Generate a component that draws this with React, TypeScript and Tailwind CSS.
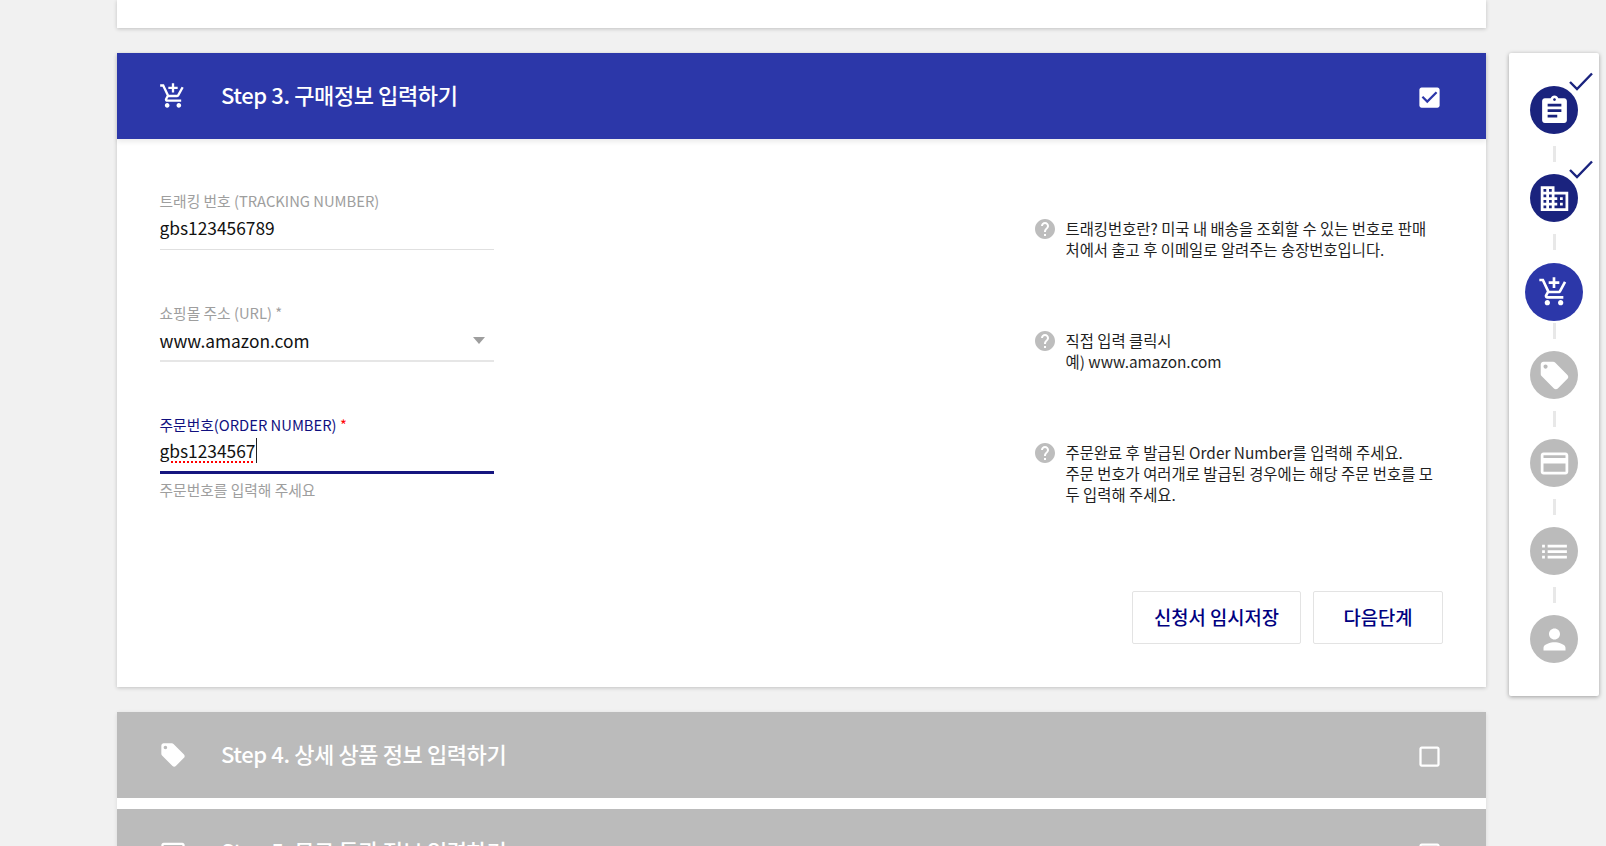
const P = {
  assignment: "M19 3h-4.18C14.4 1.84 13.3 1 12 1c-1.3 0-2.4.84-2.82 2H5c-1.1 0-2 .9-2 2v14c0 1.1.9 2 2 2h14c1.1 0 2-.9 2-2V5c0-1.1-.9-2-2-2zm-7 0c.55 0 1 .45 1 1s-.45 1-1 1-1-.45-1-1 .45-1 1-1zm2 14H7v-2h7v2zm3-4H7v-2h10v2zm0-4H7V7h10v2z",
  domain: "M12 7V3H2v18h20V7H12zM6 19H4v-2h2v2zm0-4H4v-2h2v2zm0-4H4V9h2v2zm0-4H4V5h2v2zm4 12H8v-2h2v2zm0-4H8v-2h2v2zm0-4H8V9h2v2zm0-4H8V5h2v2zm10 12h-8v-2h2v-2h-2v-2h2v-2h-2V9h8v10zm-2-8h-2v2h2v-2zm0 4h-2v2h2v-2z",
  cart: "M11 9h2V6h3V4h-3V1h-2v3H8v2h3v3zm-4 9c-1.1 0-1.99.9-1.99 2S5.9 22 7 22s2-.9 2-2-.9-2-2-2zm10 0c-1.1 0-1.99.9-1.99 2s.89 2 1.99 2 2-.9 2-2-.9-2-2-2zm-9.83-3.25l.03-.12.9-1.63h7.45c.75 0 1.41-.41 1.75-1.03l3.86-7.01L19.42 4h-.01l-1.1 2-2.76 5H8.53l-.13-.27L6.16 6l-.95-2-.94-2H1v2h2l3.6 7.59-1.35 2.45c-.16.28-.25.61-.25.96 0 1.1.9 2 2 2h12v-2H7.42c-.13 0-.25-.11-.25-.25z",
  tag: "M21.41 11.58l-9-9C12.05 2.22 11.55 2 11 2H4c-1.1 0-2 .9-2 2v7c0 .55.22 1.05.59 1.42l9 9c.36.36.86.58 1.41.58.55 0 1.05-.22 1.41-.59l7-7c.37-.36.59-.86.59-1.41 0-.55-.23-1.06-.59-1.42zM5.5 7C4.67 7 4 6.33 4 5.5S4.67 4 5.5 4 7 4.67 7 5.5 6.33 7 5.5 7z",
  card: "M20 4H4c-1.11 0-1.99.89-1.99 2L2 18c0 1.11.89 2 2 2h16c1.11 0 2-.89 2-2V6c0-1.11-.89-2-2-2zm0 14H4v-6h16v6zm0-10H4V6h16v2z",
  list: "M3 13h2v-2H3v2zm0 4h2v-2H3v2zm0-8h2V7H3v2zm4 4h14v-2H7v2zm0 4h14v-2H7v2zM7 7v2h14V7H7z",
  person: "M12 12c2.21 0 4-1.79 4-4s-1.79-4-4-4-4 1.79-4 4 1.79 4 4 4zm0 2c-2.67 0-8 1.34-8 4v2h16v-2c0-2.66-5.33-4-8-4z",
  help: "M12 2C6.48 2 2 6.48 2 12s4.48 10 10 10 10-4.48 10-10S17.52 2 12 2zm1 17h-2v-2h2v2zm2.07-7.75l-.9.92C13.45 12.9 13 13.5 13 15h-2v-.5c0-1.1.45-2.1 1.17-2.83l1.24-1.26c.37-.36.59-.86.59-1.41 0-1.1-.9-2-2-2s-2 .9-2 2H8c0-2.21 1.79-4 4-4s4 1.79 4 4c0 .88-.36 1.68-.93 2.25z",
  checked: "M19 3H5c-1.11 0-2 .9-2 2v14c0 1.1.89 2 2 2h14c1.11 0 2-.9 2-2V5c0-1.1-.89-2-2-2zm-9 14l-5-5 1.41-1.41L10 14.17l7.59-7.59L19 8l-9 9z",
  blank: "M19 5v14H5V5h14m0-2H5c-1.1 0-2 .9-2 2v14c0 1.1.9 2 2 2h14c1.1 0 2-.9 2-2V5c0-1.1-.9-2-2-2z",
};

function Icon({ d, className }: { d: string; className: string }) {
  return (
    <svg viewBox="0 0 24 24" fill="currentColor" className={className}>
      <path d={d} />
    </svg>
  );
}

function Header({ icon, title, checked, grey }: { icon: string; title: string; checked?: boolean; grey?: boolean }) {
  return (
    <div className={"relative flex h-[86px] items-center pl-[42px] pr-[43px] text-white " + (grey ? "bg-[#bbbbbb]" : "bg-[#2c37a9] shadow-[0_3px_5px_rgba(0,0,0,0.08)]")}>
      <Icon d={icon} className="h-7 w-7 shrink-0" />
      <div className="mb-[5px] ml-[34px] flex-1 text-[22px] font-medium leading-none tracking-[-0.4px] text-white">{title}</div>
      <Icon d={checked ? P.checked : P.blank} className="mt-[2px] h-[27px] w-[27px] shrink-0" />
    </div>
  );
}

function Help({ children }: { children: React.ReactNode }) {
  return (
    <div className="flex w-[409px] pt-[29px]">
      <svg viewBox="2 2 20 20" fill="currentColor" className="mt-[0.5px] h-5 w-5 shrink-0 text-[#bdbdbd]">
        <path d={P.help} />
      </svg>
      <div className="ml-[10.5px] whitespace-nowrap text-[15.4px] leading-[21px] text-[#1f1f1f]">{children}</div>
    </div>
  );
}

function Step({ icon, tone, done, big }: { icon: string; tone: "navy" | "blue" | "grey"; done?: boolean; big?: boolean }) {
  const bg = tone === "navy" ? "bg-[#1a237e]" : tone === "blue" ? "bg-[#2c37a9]" : "bg-[#bbbbbb]";
  return (
    <div className={"relative flex items-center justify-center rounded-full text-white " + bg + (big ? " h-[58px] w-[58px]" : " h-[48px] w-[48px]")}>
      <Icon d={icon} className={big ? "h-[32px] w-[32px]" : "h-[33px] w-[33px]"} />
      {done && (
        <svg viewBox="0 0 24 19" fill="none" className="absolute left-[39px] top-[-14px] h-[19px] w-[24px] text-[#1a237e]">
          <path d="M1 10 L8 17 L23 1.5" stroke="currentColor" strokeWidth="2.4" />
        </svg>
      )}
    </div>
  );
}

function Link() {
  return <div className="h-[16px] w-[3px] bg-[#e8e8e8]" />;
}

export default function App() {
  return (
    <div
      className="flex h-[846px] items-start overflow-hidden bg-[#f1f1f1] pl-[117px]"
      style={{ fontFamily: '"Noto Sans CJK KR", "Noto Sans", sans-serif' }}
    >
      <main className="w-[1369px] shrink-0">
        <div className="h-[28px] bg-white shadow-[0_1px_4px_rgba(0,0,0,0.2)]" />

        <section className="mt-[25px] bg-white shadow-[0_1px_4px_rgba(0,0,0,0.2)]">
          <Header icon={P.cart} title="Step 3. 구매정보 입력하기" checked />
          <div className="pb-[43px] pl-[42.5px] pr-[42px] pt-[50px]">
            <div className="flex h-[112px] justify-between">
              <div className="w-[334px]">
                <div className="h-6 text-[14.75px] leading-6 text-[#9e9e9e]">트래킹 번호 (TRACKING NUMBER)</div>
                <div className="h-[37px] border-b border-[#e0e0e0] text-[17.35px] leading-[30px] text-[#111111]">gbs123456789</div>
              </div>
              <Help>
                트래킹번호란? 미국 내 배송을 조회할 수 있는 번호로 판매
                <br />
                처에서 출고 후 이메일로 알려주는 송장번호입니다.
              </Help>
            </div>

            <div className="flex h-[112px] justify-between">
              <div className="w-[334px]">
                <div className="h-6 text-[14.75px] leading-6 text-[#9e9e9e]">쇼핑몰 주소 (URL) *</div>
                <div className="flex h-[37px] items-start justify-between border-b-2 border-[#e6e6e6] pr-[9px] text-[17.35px] leading-[31px] text-[#111111]">
                  <span>www.amazon.com</span>
                  <span className="mt-[12px] h-0 w-0 border-x-[6.5px] border-t-[7px] border-x-transparent border-t-[#9e9e9e]" />
                </div>
              </div>
              <Help>
                직접 입력 클릭시
                <br />
                예) www.amazon.com
              </Help>
            </div>

            <div className="flex h-[112px] justify-between">
              <div className="w-[334px]">
                <div className="h-6 text-[14.75px] leading-6 text-[#10107f]">
                  주문번호(ORDER NUMBER) <span className="text-[#ff0000]">*</span>
                </div>
                <div className="h-[37px] border-b-[3px] border-[#15157f] text-[17.35px] leading-[28px] text-[#111111]">
                  <span className="border-r border-[#222222] underline decoration-[#ff0000] decoration-dotted decoration-[1.5px] underline-offset-[3px]">gbs1234567</span>
                </div>
                <div className="mt-[6px] text-[14.75px] leading-5 text-[#9e9e9e]">주문번호를 입력해 주세요</div>
              </div>
              <Help>
                주문완료 후 발급된 Order Number를 입력해 주세요.
                <br />
                주문 번호가 여러개로 발급된 경우에는 해당 주문 번호를 모
                <br />두 입력해 주세요.
              </Help>
            </div>

            <div className="mr-px mt-[66px] flex justify-end gap-3">
              <button className="h-[53px] w-[169px] rounded-[2px] border border-[#e3e3e3] bg-white text-[18.75px] font-medium text-[#000080]">신청서 임시저장</button>
              <button className="h-[53px] w-[130px] rounded-[2px] border border-[#e3e3e3] bg-white text-[18.75px] font-medium text-[#000080]">다음단계</button>
            </div>
          </div>
        </section>

        <section className="mt-[25px] flex flex-col gap-[11px] bg-white shadow-[0_1px_4px_rgba(0,0,0,0.1)]">
          <Header icon={P.tag} title="Step 4. 상세 상품 정보 입력하기" grey />
          <Header icon={P.card} title="Step 5. 무료 통관 정보 입력하기" grey />
        </section>
      </main>

      <aside className="ml-[23px] mt-[53px] flex h-[643px] w-[90px] shrink-0 flex-col items-center rounded-[2px] bg-white pt-[33px] shadow-[0_1px_4px_rgba(0,0,0,0.35)]">
        <Step icon={P.assignment} tone="navy" done />
        <div className="my-3"><Link /></div>
        <Step icon={P.domain} tone="navy" done />
        <div className="mb-[13px] mt-3"><Link /></div>
        <Step icon={P.cart} tone="blue" big />
        <div className="mb-3 mt-[2px]"><Link /></div>
        <Step icon={P.tag} tone="grey" />
        <div className="my-3"><Link /></div>
        <Step icon={P.card} tone="grey" />
        <div className="my-3"><Link /></div>
        <Step icon={P.list} tone="grey" />
        <div className="my-3"><Link /></div>
        <Step icon={P.person} tone="grey" />
      </aside>
    </div>
  );
}
